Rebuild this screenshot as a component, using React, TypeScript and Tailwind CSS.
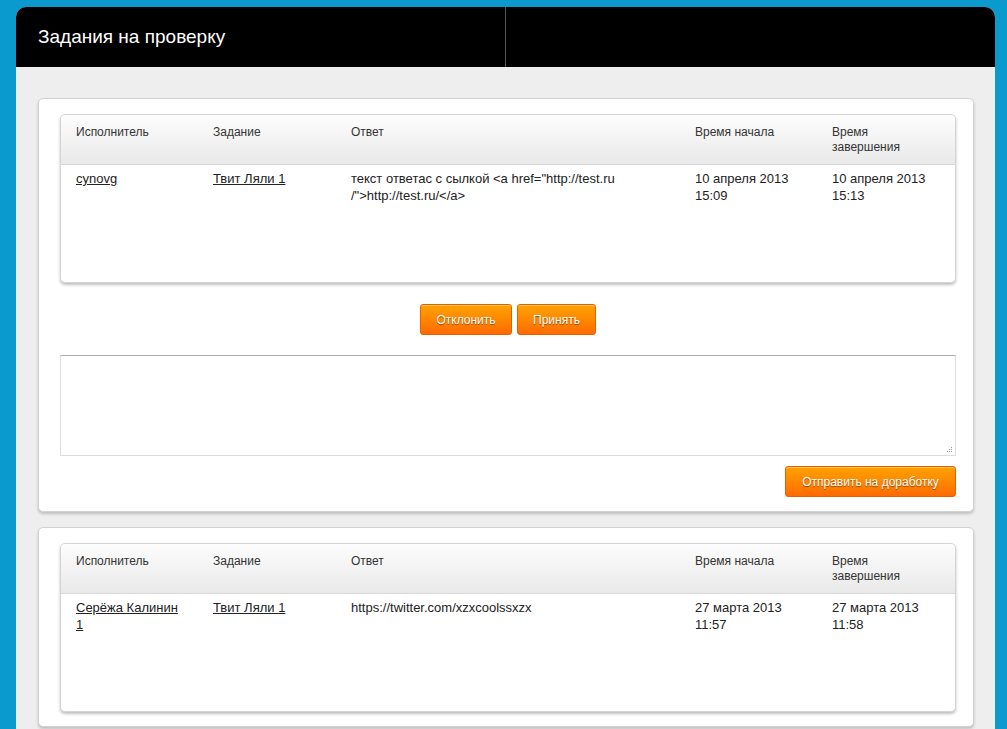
import React from "react";

type Row = {
  user: string[];
  task: string;
  answer: string[];
  start: string[];
  end: string[];
};

const font = { fontFamily: '"Liberation Sans", "DejaVu Sans", sans-serif' };

function OrangeButton({ children, className = "" }: { children: React.ReactNode; className?: string }) {
  return (
    <button
      className={
        "h-[31px] rounded-[3px] border border-[#e35f00] bg-gradient-to-b from-[#ffa200] to-[#ff6a00] text-[12px] text-white [text-shadow:0_1px_1px_rgba(0,0,0,0.45)] shadow-[inset_0_1px_0_rgba(255,255,255,0.35)] " +
        className
      }
    >
      {children}
    </button>
  );
}

function Table({ row }: { row: Row }) {
  const cols = "grid grid-cols-[137px_138px_344px_137px_1fr] pl-[15px]";
  return (
    <div className="rounded-[5px] border border-[#d4d4d4] bg-white shadow-[0_2px_3px_rgba(0,0,0,0.25)]">
      <div className={cols + " h-[50px] rounded-t-[5px] border-b border-[#d8d8d8] bg-gradient-to-b from-[#fdfdfd] to-[#e9e9e9] pt-[10px] text-[12px] leading-[15px] text-[#333]"}>
        <div>Исполнитель</div>
        <div>Задание</div>
        <div>Ответ</div>
        <div>Время начала</div>
        <div>
          Время
          <br />
          завершения
        </div>
      </div>
      <div className={cols + " h-[117px] pt-[5px] text-[13px] leading-[17px] text-[#222]"}>
        <div>
          {row.user.map((u, i) => (
            <span key={i} className="block underline">
              {u}
            </span>
          ))}
        </div>
        <div>
          <span className="underline">{row.task}</span>
        </div>
        <div>
          {row.answer.map((a, i) => (
            <span key={i} className="block whitespace-nowrap">
              {a}
            </span>
          ))}
        </div>
        <div>
          {row.start.map((a, i) => (
            <span key={i} className="block">
              {a}
            </span>
          ))}
        </div>
        <div>
          {row.end.map((a, i) => (
            <span key={i} className="block">
              {a}
            </span>
          ))}
        </div>
      </div>
    </div>
  );
}

export default function App() {
  const row1: Row = {
    user: ["cynovg"],
    task: "Твит Ляли 1",
    answer: ['текст ответас с сылкой <a href="http://test.ru', '/">http://test.ru/</a>'],
    start: ["10 апреля 2013", "15:09"],
    end: ["10 апреля 2013", "15:13"],
  };
  const row2: Row = {
    user: ["Серёжа Калинин", "1"],
    task: "Твит Ляли 1",
    answer: ["https://twitter.com/xzxcoolssxzx"],
    start: ["27 марта 2013", "11:57"],
    end: ["27 марта 2013", "11:58"],
  };

  return (
    <div
      className="h-[729px] w-full overflow-hidden bg-[#0b9acd] pl-4 pr-3 pt-[7px]"
      style={font}
    >
      <div className="h-full w-[979px] rounded-t-[10px] bg-[#eeeeee]">
        <div className="flex h-[60px] rounded-t-[10px] bg-black">
          <div className="flex w-[490px] items-center border-r border-[#555] pl-[22px] text-[19px] text-white">
            Задания на проверку
          </div>
        </div>
        <div className="flex flex-col gap-[15px] pl-[22px] pr-[21px] pt-[31px]">
          <div className="rounded-[5px] border border-[#d2d2d2] bg-white pb-[14px] pl-[21px] pr-[17px] pt-[15px] shadow-[0_2px_3px_rgba(0,0,0,0.2)]">
            <Table row={row1} />
            <div className="mt-[21px] flex justify-center gap-[5px]">
              <OrangeButton className="w-[92px]">Отклонить</OrangeButton>
              <OrangeButton className="w-[79px]">Принять</OrangeButton>
            </div>
            <div className="relative mt-[20px] h-[101px] border border-[#dcdce4] border-t-[#aaaab0] bg-white">
              <svg className="absolute bottom-[2px] right-[2px]" width="7" height="7" viewBox="0 0 7 7">
                <rect x="5" y="1" width="1" height="1" fill="#999" />
                <rect x="3" y="3" width="1" height="1" fill="#999" />
                <rect x="5" y="3" width="1" height="1" fill="#999" />
                <rect x="1" y="5" width="1" height="1" fill="#999" />
                <rect x="3" y="5" width="1" height="1" fill="#999" />
                <rect x="5" y="5" width="1" height="1" fill="#999" />
              </svg>
            </div>
            <div className="mt-[10px] flex justify-end">
              <OrangeButton className="w-[171px]">Отправить на доработку</OrangeButton>
            </div>
          </div>
          <div className="rounded-[5px] border border-[#d2d2d2] bg-white pb-[14px] pl-[21px] pr-[17px] pt-[15px] shadow-[0_2px_3px_rgba(0,0,0,0.2)]">
            <Table row={row2} />
          </div>
        </div>
      </div>
    </div>
  );
}
